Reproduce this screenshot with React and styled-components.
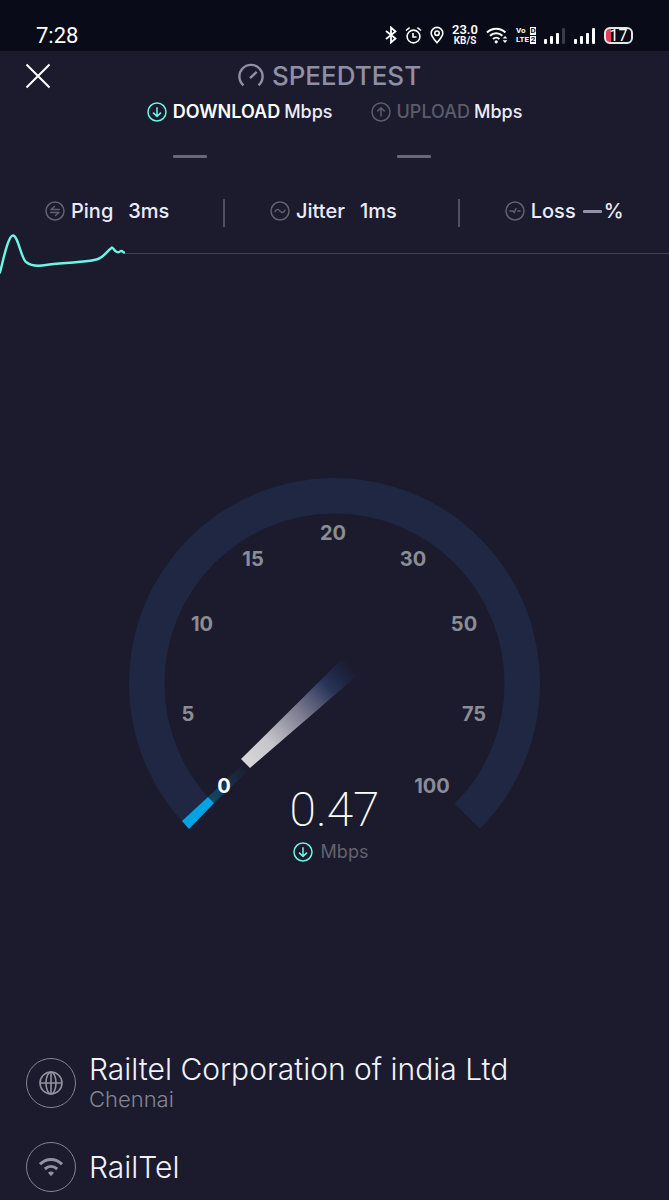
import React from "react";
import styled, { createGlobalStyle } from "styled-components";

const ticks = [
  { label: "0", x: 95, y: 315, active: true },
  { label: "5", x: 59, y: 243 },
  { label: "10", x: 73, y: 153 },
  { label: "15", x: 124, y: 88 },
  { label: "20", x: 204, y: 62 },
  { label: "30", x: 284, y: 88 },
  { label: "50", x: 335, y: 153 },
  { label: "75", x: 345, y: 243 },
  { label: "100", x: 303, y: 315 },
];

const ArrowCircle = ({ up }) => (
  <svg width="20" height="20" viewBox="0 0 20 20" fill="none" stroke="currentColor">
    <circle cx="10" cy="10" r="9" strokeWidth="1.5" />
    <path
      d={up ? "M10 14.5V6M6.3 9.4L10 5.7l3.7 3.7" : "M10 5.2v9M6 10.6l4 3.8 4-3.8"}
      strokeWidth="1.5"
    />
  </svg>
);

const MetricIcon = ({ d }) => (
  <svg width="20" height="20" viewBox="0 0 20 20" fill="none" stroke="#62616f">
    <circle cx="10" cy="10" r="9" strokeWidth="1.5" />
    <path d={d} strokeWidth="1.4" strokeLinecap="round" strokeLinejoin="round" />
  </svg>
);

const Signal = ({ weak }) => (
  <svg width="22" height="17" viewBox="0 0 22 17" fill="#fff">
    <rect x="0" y="12" width="3" height="5" rx="1" />
    <rect x="6" y="9" width="3" height="8" rx="1" />
    <rect x="12" y="6" width="3" height="11" rx="1" />
    <rect x="18" y="1" width="3" height="16" rx="1" fillOpacity={weak ? 0.2 : 1} />
  </svg>
);

const StatusIcons = () => (
  <Tray>
    <svg width="12" height="18" viewBox="0 0 12 18" fill="none" stroke="#fff" strokeWidth="1.8">
      <path d="M1 5l9.5 7.5L6 16.5v-15l4.5 4L1 13" />
    </svg>
    <svg width="17" height="18" viewBox="0 0 17 18" fill="none" stroke="#fff" strokeWidth="1.6">
      <circle cx="8.5" cy="10.5" r="6.4" />
      <path d="M8 7v4h3.5M1 4.5L4.6 1.6M16 4.5L12.4 1.6" />
    </svg>
    <svg width="14" height="18" viewBox="0 0 14 18" fill="none" stroke="#fff" strokeWidth="1.6">
      <path d="M7 16.6C4.500 13.800 1.200 10.400 1.200 7.200a5.800 5.800 0 0 1 11.600 0c0 3.200-3.300 6.600-5.800 9.400z" />
      <circle cx="7" cy="7.2" r="2.2" />
    </svg>
    <NetSpeed>
      <b>23.0</b>
      <small>KB/S</small>
    </NetSpeed>
    <svg width="22" height="18" viewBox="0 0 22 18" fill="none" stroke="#fff">
      <path
        d="M1 6.500a13 13 0 0 1 18.400 0M4 9.800a8.700 8.700 0 0 1 12.400 0M7 13a4.600 4.600 0 0 1 6.400 0"
        strokeWidth="2"
      />
      <circle cx="10.2" cy="15.8" r="1.6" fill="#fff" stroke="none" />
      <path d="M16.600 12.600l2.400-2.700 2.400 2.700zM16.600 14.200l2.400 2.700 2.400-2.700z" fill="#fff" stroke="none" />
    </svg>
    <Volte>
      <span>Vo</span>
      <em>D</em>
      <span>LTE</span>
      <em>2</em>
    </Volte>
    <Signal weak />
    <Signal />
    <Battery>
      <span>17</span>
    </Battery>
  </Tray>
);

const Gauge = () => (
  <Dial viewBox="0 0 411 352" role="img" aria-label="Speed gauge">
    <defs>
      <linearGradient id="needle" gradientUnits="userSpaceOnUse" x1="117" y1="286" x2="223" y2="188">
        <stop offset="0" stopColor="#d8d7da" />
        <stop offset="0.22" stopColor="#c6c5ca" />
        <stop offset="0.5" stopColor="#807f93" />
        <stop offset="0.78" stopColor="#293459" />
        <stop offset="0.9" stopColor="#1e2440" />
        <stop offset="1" stopColor="#1b1b2d" />
      </linearGradient>
      <linearGradient id="trail" gradientUnits="userSpaceOnUse" x1="82" y1="322" x2="118" y2="288">
        <stop offset="0" stopColor="#114864" />
        <stop offset="0.5" stopColor="#173049" />
        <stop offset="1" stopColor="#1b1b2d" />
      </linearGradient>
    </defs>
    <path
      d="M60.200 350.800A205.500 205.500 0 1 1 350.800 350.800L325.700 325.700A170 170 0 1 0 85.300 325.700Z"
      fill="#1f2742"
    />
    <path d="M79 319L112 288L118 294L85 325Z" fill="url(#trail)" />
    <path d="M53 343L79 319L85 325L60 351Z" fill="#00a3e4" />
    <path d="M112 281L214 180L230 196L121 290Z" fill="url(#needle)" />
    {ticks.map((tick) => (
      <Tick key={tick.label} x={tick.x} y={tick.y} $active={tick.active}>
        {tick.label}
      </Tick>
    ))}
  </Dial>
);

const App = () => {
  return (
    <Screen>
      <GlobalStyle />
      <StatusBar>
        <time>7:28</time>
        <StatusIcons />
      </StatusBar>
      <Header>
        <CloseButton type="button" aria-label="Close">
          <svg width="26" height="26" viewBox="0 0 26 26" fill="none" stroke="#fff" strokeWidth="2">
            <path d="M1.5 1.5l23 23M24.5 1.5l-23 23" />
          </svg>
        </CloseButton>
        <Brand>
          <svg width="26" height="26" viewBox="0 0 26 26" fill="none" stroke="currentColor" strokeWidth="2.4">
            <path d="M5.5 22.3a11.600 11.600 0 1 1 15 0M12 15.200l6.700-6.400" />
          </svg>
          SPEEDTEST
        </Brand>
      </Header>
      <Results>
        <Result>
          <ResultLabel $active>
            <ArrowCircle />
            <span>DOWNLOAD</span> <b>Mbps</b>
          </ResultLabel>
          <Dash />
        </Result>
        <Result>
          <ResultLabel>
            <ArrowCircle up />
            <span>UPLOAD</span> <b>Mbps</b>
          </ResultLabel>
          <Dash />
        </Result>
      </Results>
      <Metrics>
        <Metric>
          <MetricIcon d="M14.5 8.5H6l3.5-3M5.5 11.5H14l-3.5 3" />
          Ping <Value>3ms</Value>
        </Metric>
        <Metric>
          <MetricIcon d="M5 10.6c1.6-3 3.200-2.600 5-.6s3.400 2.200 5-.8" />
          Jitter <Value>1ms</Value>
        </Metric>
        <Metric>
          <MetricIcon d="M4.8 10h3.400l1 1.600 1.800-4M12.800 10h2.400" />
          Loss <LossDash />%
        </Metric>
      </Metrics>
      <Trace>
        <svg width="125" height="44" viewBox="0 0 125 44" fill="none" stroke="#6ff5e6" strokeWidth="2.4">
          <path
            d="M0 41.5C3 30 8 4.500 13 4.500S21 27 26 31s12 4.500 20 3 22-2 32-3 14-1 20-3 8-7 14-11.500c2 1 2 3 4 4s2.500 1.500 4 0 2.500 0 4 1"
            strokeLinejoin="round"
            strokeLinecap="round"
          />
        </svg>
        <Baseline />
      </Trace>
      <GaugeArea>
        <Gauge />
        <Reading>
          <Speed>0.47</Speed>
          <Unit>
            <ArrowCircle />
            Mbps
          </Unit>
        </Reading>
      </GaugeArea>
      <Providers>
        <Provider>
          <Badge>
            <svg width="24" height="24" viewBox="0 0 24 24" fill="none" stroke="currentColor" strokeWidth="1.6">
              <circle cx="12" cy="12" r="11" />
              <ellipse cx="12" cy="12" rx="5" ry="11" />
              <path d="M12 1v22M1 12h22" />
            </svg>
          </Badge>
          <div>
            <ProviderName>Railtel Corporation of india Ltd</ProviderName>
            <City>Chennai</City>
          </div>
        </Provider>
        <Provider>
          <Badge>
            <svg width="24" height="20" viewBox="0 0 24 20" fill="none" stroke="currentColor" strokeWidth="3">
              <path d="M1 7.2c6.500-6.400 15.500-6.400 22 0M5.800 12c3.800-3.300 8.600-3.300 12.400 0" />
              <path d="M9 15.700c1.800-1.700 4.200-1.700 6 0L12 19.200z" fill="currentColor" stroke="none" />
            </svg>
          </Badge>
          <ProviderName>RailTel</ProviderName>
        </Provider>
      </Providers>
    </Screen>
  );
};

const GlobalStyle = createGlobalStyle`
  * {
    box-sizing: border-box;
  }
  body {
    margin: 0;
    background: #1b1b2d;
    color: #ebebfa;
    font-family: Inter, "Open Sans", sans-serif;
  }
  svg {
    display: block;
    flex: none;
  }
  h1, p {
    margin: 0;
  }
`;

const Screen = styled.main`
  min-height: 100vh;
  display: flex;
  flex-direction: column;
`;

const StatusBar = styled.div`
  display: flex;
  align-items: center;
  justify-content: space-between;
  height: 51px;
  padding: 19px 36px 0;
  background: #090b18;
  color: #fff;
  font-family: Roboto, sans-serif;
  font-size: 22px;
`;

const Tray = styled.div`
  display: flex;
  align-items: center;
  gap: 8px;
`;

const NetSpeed = styled.div`
  display: flex;
  flex-direction: column;
  align-items: center;
  b {
    font-size: 13px;
    font-weight: 600;
    line-height: 12px;
  }
  small {
    font-size: 10px;
    font-weight: 600;
    line-height: 10px;
  }
`;

const Volte = styled.div`
  display: grid;
  grid-template-columns: 14px 6px;
  row-gap: 1px;
  font-size: 8px;
  font-weight: 700;
  line-height: 8px;
  em {
    background: #fff;
    color: #090b18;
    font-style: normal;
    text-align: center;
  }
`;

const Battery = styled.div`
  width: 29px;
  height: 17px;
  border: 2px solid #e6e6ea;
  border-radius: 6px;
  background: linear-gradient(90deg, #e0405a 5px, transparent 5px);
  font-size: 16px;
  line-height: 13px;
  text-align: center;
`;

const Header = styled.header`
  display: grid;
  grid-template-columns: 1fr auto 1fr;
  align-items: center;
  height: 50px;
  padding: 0 35px 0 25px;
`;

const CloseButton = styled.button`
  justify-self: start;
  padding: 0;
  border: 0;
  background: none;
  cursor: pointer;
`;

const Brand = styled.h1`
  display: flex;
  align-items: center;
  gap: 8px;
  color: #8f8fa6;
  font-size: 26px;
  font-weight: 500;
  line-height: 32px;
`;

const Results = styled.section`
  display: flex;
  justify-content: center;
  gap: 38px;
`;

const Result = styled.div`
  display: flex;
  flex-direction: column;
  gap: 32px;
`;

const ResultLabel = styled.div`
  display: flex;
  align-items: center;
  font-size: 18px;
  font-weight: 500;
  line-height: 22px;
  svg {
    margin-right: 6px;
    color: ${(props) => (props.$active ? "#6ff5e6" : "#5c5b6b")};
  }
  span {
    margin-right: 4px;
    color: ${(props) => (props.$active ? "#ffffff" : "#5c5b6b")};
    font-weight: ${(props) => (props.$active ? 600 : 500)};
  }
  b {
    font-weight: 500;
  }
`;

const Dash = styled.div`
  width: 34px;
  height: 3px;
  margin-left: 26px;
  border-radius: 1px;
  background: #68677a;
`;

const Metrics = styled.section`
  display: grid;
  grid-template-columns: 19fr 20fr 18fr;
  margin-top: 41px;
`;

const Metric = styled.div`
  display: flex;
  align-items: center;
  height: 28px;
  padding: 0 0 4px 45px;
  font-size: 20px;
  font-weight: 500;
  svg {
    margin-right: 6px;
  }
  & + & {
    border-left: 2px solid #515061;
  }
`;

const Value = styled.span`
  margin-left: 15px;
`;

const LossDash = styled.span`
  width: 19px;
  height: 3px;
  margin: 0 2px 0 7px;
  border-radius: 1px;
  background: #9292a8;
`;

const Trace = styled.div`
  display: flex;
  align-items: center;
  margin-top: 4px;
`;

const Baseline = styled.div`
  flex: 1;
  height: 1px;
  background: #43434f;
`;

const GaugeArea = styled.section`
  flex: 1;
  display: flex;
  flex-direction: column;
  align-items: center;
  padding: 203px 16px 100px;
`;

const Dial = styled.svg`
  width: 411px;
  max-width: 100%;
`;

const Tick = styled.text`
  fill: ${(props) => (props.$active ? "#ffffff" : "#8c8c97")};
  font-size: 20px;
  font-weight: 700;
  text-anchor: middle;
`;

const Reading = styled.div`
  display: flex;
  flex-direction: column;
  align-items: center;
  margin-top: -44px;
`;

const Speed = styled.p`
  color: #fff;
  font-family: Roboto, sans-serif;
  font-size: 48px;
  font-weight: 200;
  line-height: 48px;
`;

const Unit = styled.div`
  display: flex;
  align-items: center;
  gap: 8px;
  margin-top: 7px;
  padding-right: 8px;
  color: #62616f;
  font-size: 18px;
  line-height: 22px;
  svg {
    color: #6ff5e6;
  }
`;

const Providers = styled.footer`
  display: flex;
  flex-direction: column;
  gap: 29px;
  padding: 0 26px 8px;
`;

const Provider = styled.div`
  display: flex;
  align-items: center;
  gap: 13px;
`;

const Badge = styled.div`
  display: flex;
  flex: none;
  align-items: center;
  justify-content: center;
  width: 50px;
  height: 50px;
  border: 1px solid #85858f;
  border-radius: 50%;
  color: #9191a0;
`;

const ProviderName = styled.p`
  color: #f2f2fa;
  font-size: 30px;
  font-weight: 300;
  line-height: 32px;
`;

const City = styled.p`
  color: #85858f;
  font-size: 22px;
  font-weight: 300;
  line-height: 28px;
`;

export default App;
